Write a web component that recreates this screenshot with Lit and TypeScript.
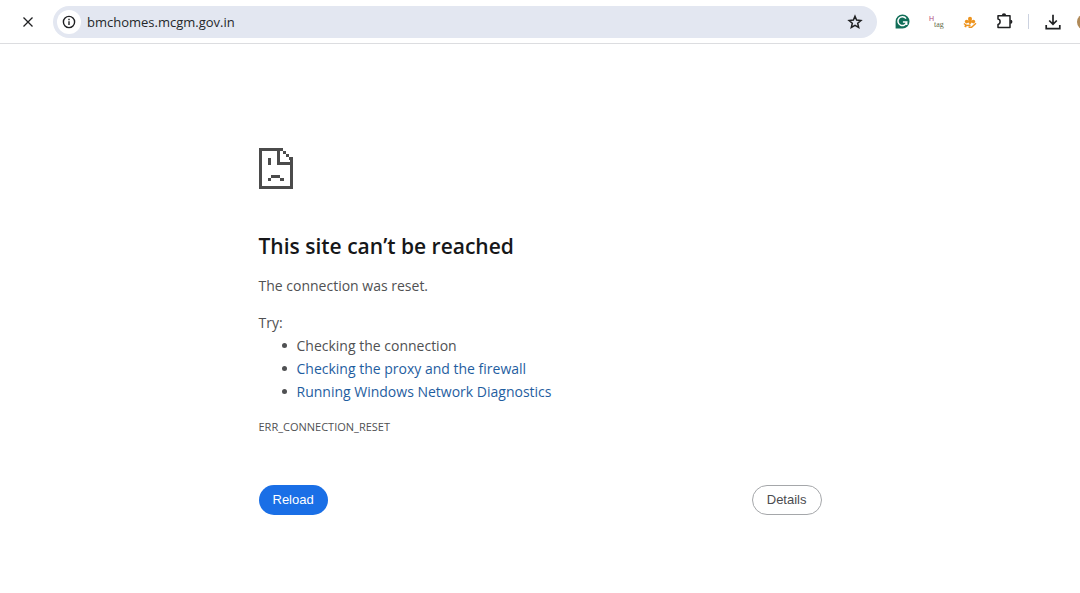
import { LitElement, html, css } from "lit";
import { customElement } from "lit/decorators.js";

@customElement("browser-toolbar")
class BrowserToolbar extends LitElement {
  static styles = css`
    :host { display: block; }
    .bar {
      display: flex;
      align-items: center;
      height: 43px;
      border-bottom: 1px solid #dcdde0;
      overflow: hidden;
      background: #fff;
    }
    button {
      display: grid;
      place-items: center;
      flex: none;
      padding: 0;
      border: 0;
      background: none;
      color: #1f2022;
    }
    svg { display: block; }
    .stop { width: 24px; height: 24px; margin: 0 13px 0 16px; }
    .address {
      display: flex;
      align-items: center;
      flex: 1;
      min-width: 0;
      height: 32px;
      box-sizing: border-box;
      padding: 0 12px 0 4px;
      border-radius: 16px;
      background: #e3e7f1;
    }
    .info { width: 24px; height: 24px; border-radius: 50%; background: #fff; }
    input {
      flex: 1;
      min-width: 0;
      margin: 0 0 0 6px;
      padding: 0;
      border: 0;
      outline: 0;
      background: none;
      color: #25272b;
      font: 13px/20px "Open Sans", "Noto Sans", sans-serif;
    }
    .star { width: 20px; height: 20px; }
    .tools { display: flex; align-items: center; flex: none; gap: 14px; margin-left: 15px; }
    .tools button { width: 20px; height: 20px; }
    .divider { width: 1px; height: 15px; background: #ccd2e0; }
    .avatar { width: 3px; overflow: hidden; }
    .face { width: 16px; height: 16px; border-radius: 50%; background: #b08a58; }
    .end { display: flex; align-items: center; gap: 14px; }
    .tag { overflow: visible; }
  `;

  render() {
    return html`
      <div class="bar">
        <button class="stop" aria-label="Stop loading">
          <svg width="10" height="10" viewBox="0 0 10 10" fill="none" stroke="currentColor" stroke-width="1.3">
            <path d="M.5.5 9.5 9.5M9.5.5.5 9.5" />
          </svg>
        </button>
        <div class="address">
          <button class="info" aria-label="View site information">
            <svg width="14" height="14" viewBox="0 0 14 14" fill="none" stroke="currentColor" stroke-width="1.4">
              <circle cx="7" cy="7" r="5.6" />
              <path d="M7 6.3v3.8M7 3.8v1.5" />
            </svg>
          </button>
          <input aria-label="Address" value="bmchomes.mcgm.gov.in" spellcheck="false" />
          <button class="star" aria-label="Bookmark this page">
            <svg width="16" height="16" viewBox="0 0 16 16" fill="none" stroke="currentColor" stroke-width="1.5">
              <path d="m8 2.2 1.6 3.9 4.3.4-3.2 2.8 1 4.2L8 11.3l-3.7 2.2 1-4.2-3.2-2.8 4.3-.4z" />
            </svg>
          </button>
        </div>
        <div class="tools">
          <button aria-label="Grammar extension">
            <svg width="15" height="15" viewBox="0 0 15 15">
              <path d="M7.5.5a7 7 0 1 1 0 14H.6V7.5a7 7 0 0 1 6.9-7z" fill="#116e58" />
              <path d="M11 4.7A4.4 4.4 0 1 0 11.7 8H7.9M11.7 8.1v2.8" fill="none" stroke="#fff" stroke-width="1.5" />
            </svg>
          </button>
          <button aria-label="Heading tag extension">
            <svg class="tag" width="16" height="16" viewBox="0 0 16 16">
              <text x="1" y="7" fill="#b0487e" font-family="Liberation Sans" font-size="7">H</text>
              <text x="6" y="13" fill="#5f6b48" font-family="Liberation Serif" font-size="8">tag</text>
            </svg>
          </button>
          <button aria-label="Orange extension">
            <svg width="14" height="14" viewBox="0 0 14 14" fill="#ed941f">
              <circle cx="7" cy="3.8" r="2" />
              <circle cx="3.6" cy="6.6" r="1.8" />
              <circle cx="10.4" cy="6.6" r="1.8" />
              <path d="M5.8 4h2.4l1 3L7 9.4 4.8 7z" />
              <path d="M1 8.4c2 2.2 4.4 2.6 6.4 1.6M5.6 12.2h3l4.4-3.9M1.6 11l1.8.8" fill="none" stroke="#ed941f" stroke-width="1.5" />
            </svg>
          </button>
          <button aria-label="Extensions">
            <svg width="17" height="17" viewBox="0 0 17 17" fill="none" stroke="currentColor" stroke-width="1.5" stroke-linejoin="round">
              <path d="M2 2.8h12v11.8H2v-3.2c2.8-.5 2.8-4.9 0-5.4z" />
              <path d="M6.6 2.4a1.3 1.2 0 0 1 2.8 0M14.4 7.4a1.2 1.3 0 0 1 0 2.8" fill="currentColor" />
            </svg>
          </button>
          <div class="end">
            <span class="divider"></span>
            <button aria-label="Downloads">
              <svg width="16" height="16" viewBox="0 0 16 16" fill="none" stroke="currentColor" stroke-width="1.7">
                <path d="M8 .8v9.4M4.2 6.5 8 10.3l3.8-3.8M1.2 11v3.7h13.6V11" />
              </svg>
            </button>
            <div class="avatar"><div class="face"></div></div>
          </div>
        </div>
      </div>
    `;
  }
}

@customElement("app-root")
class AppRoot extends LitElement {
  static styles = css`
    :host {
      display: block;
      min-height: 100vh;
      background: #fff;
      color: #505153;
      font: 14px/22px "Open Sans", "Noto Sans", sans-serif;
    }
    main {
      max-width: 563px;
      margin: 0 auto;
      padding: 104px 24px 0;
    }
    .sad { display: block; }
    h1 {
      margin: 41px 0 0;
      color: #161719;
      font-size: 21px;
      line-height: 32px;
      font-weight: 600;
    }
    p { margin: 13px 0 0; }
    .try { margin-top: 15px; }
    ul { margin: 0; padding-left: 23px; list-style: none; }
    li { display: flex; align-items: center; gap: 10px; line-height: 23px; }
    li::before {
      content: "";
      flex: none;
      width: 5px;
      height: 5px;
      border-radius: 50%;
      background: #505153;
    }
    a { color: #1f5e9f; text-decoration: none; }
    .code { font-size: 11px; }
    .actions {
      display: flex;
      align-items: center;
      justify-content: space-between;
      margin-top: 47px;
    }
    .actions button {
      height: 30px;
      padding: 0 14px;
      border: 0;
      border-radius: 15px;
      font: 13px/16px "Liberation Sans", Arial, sans-serif;
    }
    .actions .reload { background: #1a6fe6; color: #fff; }
    .actions .details { border: 1px solid #a5a7aa; background: #fff; color: #4b4c4f; }
  `;

  render() {
    return html`
      <browser-toolbar></browser-toolbar>
      <main>
        <svg class="sad" width="34" height="41" viewBox="0 0 34 41" fill="#4b4b4b" shape-rendering="crispEdges" aria-hidden="true">
          <path d="M0 0h24v3H3v35h28V17H18V3h3v11h10v-2h3v29H0z" />
          <path d="M24 3h3v3h-3zM27 6h3v3h-3zM30 9h4v3h-4z" />
          <path d="M9 10h3v7H9zM12 27h9v3h-9zM9 30h3v3H9zM21 30h4v3h-4z" />
        </svg>
        <h1>This site can’t be reached</h1>
        <p>The connection was reset.</p>
        <p class="try">Try:</p>
        <ul>
          <li>Checking the connection</li>
          <li><a href="#proxy">Checking the proxy and the firewall</a></li>
          <li><a href="#diagnostics">Running Windows Network Diagnostics</a></li>
        </ul>
        <p class="code">ERR_CONNECTION_RESET</p>
        <div class="actions">
          <button class="reload">Reload</button>
          <button class="details">Details</button>
        </div>
      </main>
    `;
  }
}
